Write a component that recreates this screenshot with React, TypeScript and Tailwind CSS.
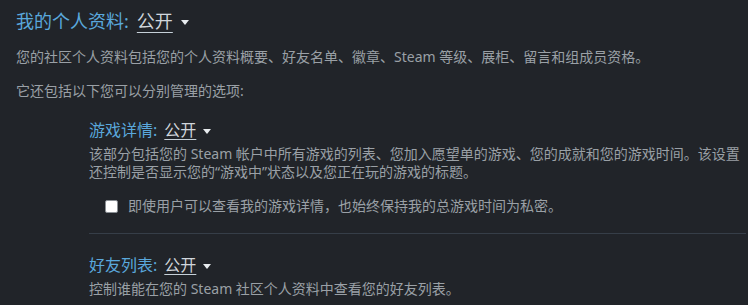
import { useState } from "react";

const FONT = "font-['Noto_Sans','Noto_Sans_CJK_SC',sans-serif]";

function PrivacyValue({ value, size }: { value: string; size: "lg" | "md" }) {
  return (
    <span className="inline-flex items-center">
      <span
        className={
          size === "lg"
            ? "text-[#d0d6dc] underline decoration-[#c6d0d8] underline-offset-[4px]"
            : "text-[#d0d6dc] underline decoration-[#c6d0d8] underline-offset-[3px]"
        }
      >
        {value}
      </span>
      <svg
        width="8"
        height="5"
        viewBox="0 0 8 5"
        className={size === "lg" ? "ml-[8px] mt-[2px]" : "ml-[7px] mt-[2px]"}
      >
        <path d="M0 0 L8 0 L4 5 Z" fill="#e8ecef" />
      </svg>
    </span>
  );
}

function SubSection({ title, desc, children }: { title: string; desc: string; children?: React.ReactNode }) {
  return (
    <div>
      <div className="text-[16px] leading-[22px] flex items-center">
        <span className="text-[#5aa8dc]">{title}:</span>
        <span className="ml-[7px]">
          <PrivacyValue value="公开" size="md" />
        </span>
      </div>
      <p className="mt-[4px] text-[14px] leading-[18px] text-[#9aa0a6]">{desc}</p>
      {children}
    </div>
  );
}

export default function App() {
  const [hidePlaytime, setHidePlaytime] = useState(false);

  return (
    <div className={`${FONT} bg-[#212429] w-[748px] h-[305px] overflow-hidden pl-[16px] pr-[2px] pt-[9px]`}>
      {/* Profile */}
      <div className="text-[18px] leading-[24px] flex items-center">
        <span className="text-[#5aa8dc]">我的个人资料:</span>
        <span className="ml-[8px]">
          <PrivacyValue value="公开" size="lg" />
        </span>
      </div>
      <p className="mt-[15px] text-[14px] leading-[18px] text-[#9aa0a6]">
        您的社区个人资料包括您的个人资料概要、好友名单、徽章、Steam 等级、展柜、留言和组成员资格。
      </p>
      <p className="mt-[16px] text-[14px] leading-[18px] text-[#9aa0a6]">它还包括以下您可以分别管理的选项:</p>

      <div className="ml-[73px] mt-[19px]">
        <SubSection
          title="游戏详情"
          desc="该部分包括您的 Steam 帐户中所有游戏的列表、您加入愿望单的游戏、您的成就和您的游戏时间。该设置还控制是否显示您的“游戏中”状态以及您正在玩的游戏的标题。"
        >
          <label className="mt-[16px] ml-[16px] flex items-center gap-[10px] text-[14px] leading-[18px] text-[#9aa0a6] cursor-pointer">
            <input
              type="checkbox"
              checked={hidePlaytime}
              onChange={() => setHidePlaytime(!hidePlaytime)}
              className="appearance-none w-[13px] h-[13px] bg-white border border-[#8a8f94] rounded-[2px] checked:bg-[#5aa8dc]"
            />
            即使用户可以查看我的游戏详情，也始终保持我的总游戏时间为私密。
          </label>
        </SubSection>

        <div className="mt-[18px] h-px bg-[#363e48]" />

        <div className="mt-[20px]">
          <SubSection title="好友列表" desc="控制谁能在您的 Steam 社区个人资料中查看您的好友列表。" />
        </div>
      </div>
    </div>
  );
}
